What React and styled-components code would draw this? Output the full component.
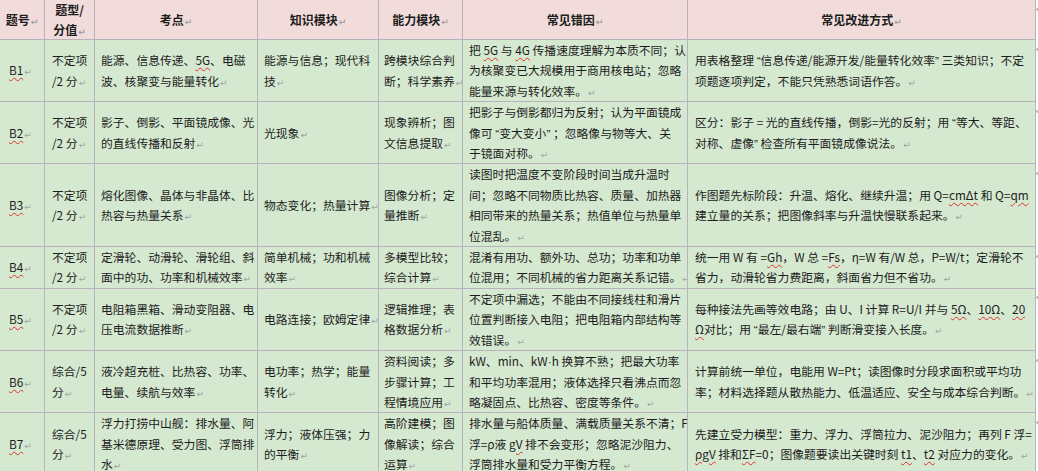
import React from "react";
import styled, { createGlobalStyle } from "styled-components";

const GlobalStyle = createGlobalStyle`
  html, body {
    margin: 0;
    padding: 0;
    background: #ffffff;
    overflow: hidden;
  }
  body {
    font-family: "Noto Sans CJK SC", "Liberation Sans", sans-serif;
  }
`;

const head = [
  ["题号"],
  ["题型/", "分值"],
  ["考点"],
  ["知识模块"],
  ["能力模块"],
  ["常见错因"],
  ["常见改进方式"],
];

// ~text~ marks a word with the red spell-check wave under it
const rows = [
  {
    id: "B1",
    cells: [
      ["不定项", "/2 分"],
      ["能源、信息传递、~5G~、电磁", "波、核聚变与能量转化"],
      ["能源与信息；现代科", "技"],
      ["跨模块综合判", "断；科学素养"],
      [
        "把 ~5G~ 与 ~4G~ 传播速度理解为本质不同；认",
        "为核聚变已大规模用于商用核电站；忽略",
        "能量来源与转化效率。",
      ],
      [
        "用表格整理 “信息传递/能源开发/能量转化效率” 三类知识；不定",
        "项题逐项判定，不能只凭熟悉词语作答。",
      ],
    ],
  },
  {
    id: "B2",
    cells: [
      ["不定项", "/2 分"],
      ["影子、倒影、平面镜成像、光", "的直线传播和反射"],
      ["光现象"],
      ["现象辨析；图", "文信息提取"],
      [
        "把影子与倒影都归为反射；认为平面镜成",
        "像可 “变大变小” ；忽略像与物等大、关",
        "于镜面对称。",
      ],
      [
        "区分：影子 = 光的直线传播，倒影=光的反射；用 “等大、等距、",
        "对称、虚像” 检查所有平面镜成像说法。",
      ],
    ],
  },
  {
    id: "B3",
    cells: [
      ["不定项", "/2 分"],
      ["熔化图像、晶体与非晶体、比", "热容与热量关系"],
      ["物态变化；热量计算"],
      ["图像分析；定", "量推断"],
      [
        "读图时把温度不变阶段时间当成升温时",
        "间；忽略不同物质比热容、质量、加热器",
        "相同带来的热量关系；热值单位与热量单",
        "位混乱。",
      ],
      [
        "作图题先标阶段：升温、熔化、继续升温；用 Q=~cmΔt~ 和 Q=~qm~",
        "建立量的关系；把图像斜率与升温快慢联系起来。",
      ],
    ],
  },
  {
    id: "B4",
    cells: [
      ["不定项", "/2 分"],
      ["定滑轮、动滑轮、滑轮组、斜", "面中的功、功率和机械效率"],
      ["简单机械；功和机械", "效率"],
      ["多模型比较；", "综合计算"],
      [
        "混淆有用功、额外功、总功；功率和功单",
        "位混用；不同机械的省力距离关系记错。",
      ],
      [
        "统一用 W 有 =~Gh~，W 总 =~Fs~，η=W 有/W 总，P=W/t；定滑轮不",
        "省力，动滑轮省力费距离，斜面省力但不省功。",
      ],
    ],
  },
  {
    id: "B5",
    cells: [
      ["不定项", "/2 分"],
      ["电阻箱黑箱、滑动变阻器、电", "压电流数据推断"],
      ["电路连接；欧姆定律"],
      ["逻辑推理；表", "格数据分析"],
      [
        "不定项中漏选；不能由不同接线柱和滑片",
        "位置判断接入电阻；把电阻箱内部结构等",
        "效错误。",
      ],
      [
        "每种接法先画等效电路；由 U、I 计算 R=U/I 并与 ~5Ω~、~10Ω~、~20~",
        "~Ω~对比；用 “最左/最右端” 判断滑变接入长度。",
      ],
    ],
  },
  {
    id: "B6",
    cells: [
      ["综合/5", "分"],
      ["液冷超充桩、比热容、功率、", "电量、续航与效率"],
      ["电功率；热学；能量", "转化"],
      ["资料阅读；多", "步骤计算；工", "程情境应用"],
      [
        "kW、min、kW·h 换算不熟；把最大功率",
        "和平均功率混用；液体选择只看沸点而忽",
        "略凝固点、比热容、密度等条件。",
      ],
      [
        "计算前统一单位，电能用 W=Pt；读图像时分段求面积或平均功",
        "率；材料选择题从散热能力、低温适应、安全与成本综合判断。",
      ],
    ],
  },
  {
    id: "B7",
    cells: [
      ["综合/5", "分"],
      ["浮力打捞中山舰：排水量、阿", "基米德原理、受力图、浮筒排", "水"],
      ["浮力；液体压强；力", "的平衡"],
      ["高阶建模；图", "像解读；综合", "运算"],
      [
        "排水量与船体质量、满载质量关系不清；F",
        "浮=ρ液 ~gV~ 排不会变形；忽略泥沙阻力、",
        "浮筒排水量和受力平衡方程。",
      ],
      [
        "先建立受力模型：重力、浮力、浮筒拉力、泥沙阻力；再列 F 浮=",
        "~ρgV~ 排和~ΣF~=0；图像题要读出关键时刻 ~t1~、~t2~ 对应力的变化。",
      ],
    ],
  },
];

const widths = [45, 50, 163, 121, 84, 225, 348, 12];
const pads = [9, 7, 6, 6, 5, 6, 7];

const Page = styled.div`
  width: 1038px;
  height: 471px;
  overflow: hidden;
`;

const Table = styled.table`
  border-collapse: collapse;
  table-layout: fixed;
  width: ${widths.reduce((a, b) => a + b, 0)}px;
  margin: -1px 0 0 -1px;
  color: #1c1c1c;
`;

const HeadCell = styled.th`
  background: #f2dcdb;
  border: 1px solid #b7b3bd;
  height: 39px;
  padding: 0 2px;
  font-size: 12px;
  font-weight: bold;
  text-align: center;
  vertical-align: middle;
  line-height: 19.5px;
  overflow: hidden;
`;

const BodyCell = styled.td`
  background: #d5e8d0;
  border: 1px solid #b7b3bd;
  padding: 0 0 0 ${(p) => p.$pad}px;
  font-size: 11.8px;
  text-align: left;
  vertical-align: middle;
  line-height: 20.4px;
  overflow: hidden;
`;

const EndCell = styled.td`
  border: none;
  background: #ffffff;
  vertical-align: top;
  padding: 0;
  line-height: 20.4px;
  color: #9c9c9c;
  font-size: 8px;
  font-family: "DejaVu Sans", sans-serif;
`;

const Line = styled.span`
  display: block;
  white-space: nowrap;
`;

const Wavy = styled.span`
  text-decoration: underline wavy #e0322b;
  text-decoration-thickness: 1px;
  text-underline-offset: 2px;
`;

const Narrow = styled.span`
  font-family: "Liberation Sans", sans-serif;
  line-height: 0;
`;

const Mark = styled.span`
  color: #a2a2a2;
  font-size: 9px;
  line-height: 0;
  font-family: "DejaVu Sans", sans-serif;
  margin-left: 1px;
`;

const renderPlain = (text, key) =>
  text.split(/([“”·])/).map((bit, j) =>
    /^[“”·]$/.test(bit) ? (
      <Narrow key={`${key}-${j}`}>{bit}</Narrow>
    ) : (
      <React.Fragment key={`${key}-${j}`}>{bit}</React.Fragment>
    )
  );

const renderText = (text) =>
  text.split("~").map((part, i) =>
    i % 2 === 1 ? <Wavy key={i}>{part}</Wavy> : renderPlain(part, i)
  );

const Lines = ({ lines }) =>
  lines.map((line, i) => (
    <Line key={i}>
      {renderText(line)}
      {i === lines.length - 1 && <Mark>↵</Mark>}
    </Line>
  ));

export default function App() {
  return (
    <Page>
      <GlobalStyle />
      <Table>
        <colgroup>
          {widths.map((w, i) => (
            <col key={i} style={{ width: w }} />
          ))}
        </colgroup>
        <thead>
          <tr>
            {head.map((lines, i) => (
              <HeadCell key={i}>
                <Lines lines={lines} />
              </HeadCell>
            ))}
            <EndCell>↵</EndCell>
          </tr>
        </thead>
        <tbody>
          {rows.map((row) => (
            <tr key={row.id}>
              <BodyCell $pad={pads[0]}>
                <Lines lines={[`~${row.id}~`]} />
              </BodyCell>
              {row.cells.map((lines, i) => (
                <BodyCell key={i} $pad={pads[i + 1]}>
                  <Lines lines={lines} />
                </BodyCell>
              ))}
              <EndCell>↵</EndCell>
            </tr>
          ))}
        </tbody>
      </Table>
    </Page>
  );
}
